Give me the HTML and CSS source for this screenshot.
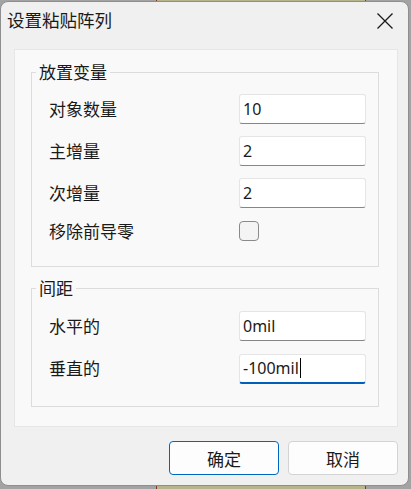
FILE: index.html
```html
<!DOCTYPE html>
<html lang="zh-CN">
<head>
<meta charset="utf-8">
<title>设置粘贴阵列</title>
<link rel="stylesheet" href="styles.css">
</head>
<body>
<div class="window">
  <div class="titlebar">
    <span class="title">设置粘贴阵列</span>
    <svg class="close" width="16" height="16" viewBox="0 0 16 16"><path d="M0.5 0.5 L15.5 15.5 M15.5 0.5 L0.5 15.5" stroke="#1a1a1a" stroke-width="1.3" fill="none"/></svg>
  </div>
  <div class="panel">
    <fieldset class="group g1">
      <legend>放置变量</legend>
      <div class="row"><span class="label">对象数量</span><div class="input">10</div></div>
      <div class="row"><span class="label">主增量</span><div class="input">2</div></div>
      <div class="row"><span class="label">次增量</span><div class="input">2</div></div>
      <div class="row short"><span class="label">移除前导零</span><div class="check"></div></div>
    </fieldset>
    <fieldset class="group g2">
      <legend>间距</legend>
      <div class="row"><span class="label">水平的</span><div class="input">0mil</div></div>
      <div class="row"><span class="label">垂直的</span><div class="input focus">-100mil<span class="caret"></span></div></div>
    </fieldset>
  </div>
  <div class="buttons">
    <button class="btn primary">确定</button>
    <button class="btn">取消</button>
  </div>
</div>
</body>
</html>
```

FILE: styles.css
```css
html, body {
  margin: 0;
  padding: 0;
}
body {
  width: 411px;
  height: 489px;
  overflow: hidden;
  background: linear-gradient(to right, #a3a3a3 0, #a3a3a3 156px, #7a3a30 156px, #7a3a30 157px, #b6b48c 157px, #b6b48c 365px, #7a3a30 365px, #7a3a30 366px, #a3a3a3 366px);
  font-family: "Noto Sans CJK SC", "Noto Sans", sans-serif;
  color: #1a1a1a;
  padding-top: 1px;
  box-sizing: border-box;
}
.window {
  width: 409px;
  height: 485px;
  background: #f0f0f0;
  border: 1px solid #8e8e8e;
  border-radius: 8px;
  box-sizing: border-box;
  display: flex;
  flex-direction: column;
}
.titlebar {
  height: 47px;
  display: flex;
  align-items: flex-start;
  justify-content: space-between;
  padding: 7px 15px 0 6px;
  box-sizing: border-box;
}
.title {
  font-size: 17.5px;
  line-height: 22px;
  letter-spacing: 0;
}
.close {
  margin-top: 4px;
}
.panel {
  margin-left: 13px;
  width: 384px;
  height: 378px;
  background: #f9f9f9;
  border: 1px solid #e6e6e6;
  box-sizing: border-box;
  padding: 12px 0 0 16px;
}
.group {
  width: 348px;
  margin: 0;
  border: 1px solid #dcdcdc;
  padding: 12px 0 24px 4px;
  box-sizing: border-box;
}
.group legend {
  font-size: 17px;
  line-height: 20px;
  padding: 0 3px;
}
.g2 {
  margin-top: 11px;
  padding-top: 13px;
  padding-bottom: 23px;
}
.row {
  display: flex;
  align-items: center;
  height: 30px;
  padding-left: 13px;
  margin-bottom: 12px;
}
.row:last-child {
  margin-bottom: 0;
}
.row.short {
  height: 22px;
}
.label {
  width: 190px;
  font-size: 17px;
  line-height: 22px;
}
.input {
  width: 127px;
  height: 30px;
  box-sizing: border-box;
  background: #ffffff;
  border: 1px solid #e5e5e5;
  border-bottom: 1px solid #868686;
  border-radius: 3px;
  font-family: "Noto Sans", sans-serif;
  font-size: 16px;
  line-height: 27px;
  padding-left: 3px;
  display: flex;
  align-items: center;
}
.input.focus {
  border-bottom: 2px solid #005fb8;
  margin-top: 1px;
}
.caret {
  display: inline-block;
  width: 1px;
  height: 20px;
  background: #000;
  margin-left: 1px;
}
.check {
  width: 20px;
  height: 20px;
  box-sizing: border-box;
  border: 1px solid #8a8a8a;
  border-radius: 4px;
  background: #f4f4f4;
}
.buttons {
  display: flex;
  justify-content: flex-end;
  gap: 9px;
  padding: 14px 10px 0 0;
}
.btn {
  width: 110px;
  height: 34px;
  box-sizing: border-box;
  background: #fdfdfd;
  border: 1px solid #d3d3d3;
  border-radius: 4px;
  font-family: "Noto Sans CJK SC", sans-serif;
  font-size: 17px;
  color: #1a1a1a;
  padding: 0;
}
.btn.primary {
  border-color: #0067c0;
}
```
